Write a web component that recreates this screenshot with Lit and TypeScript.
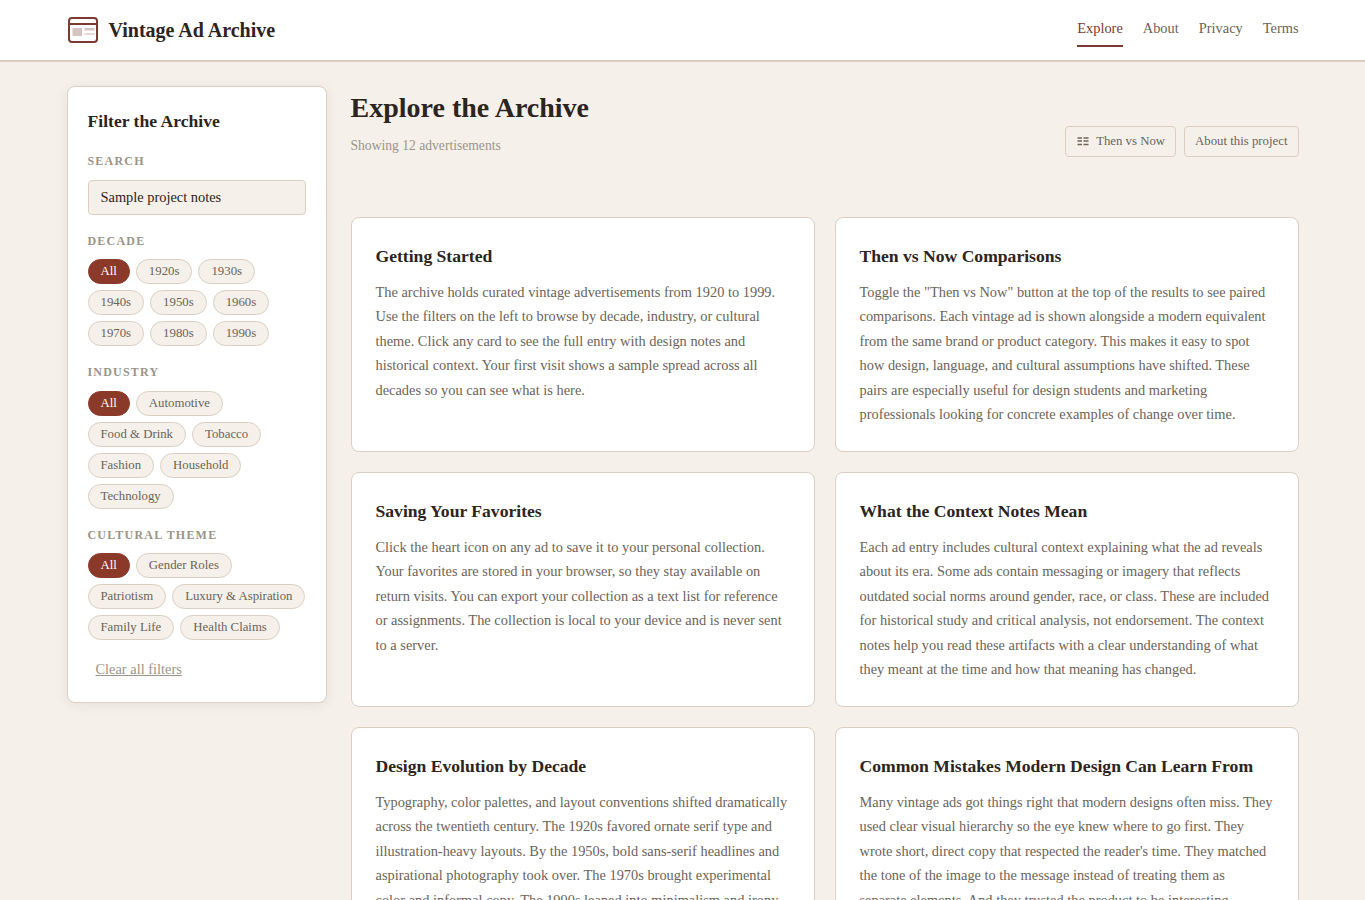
import { LitElement, html, css } from "lit";
import { customElement } from "lit/decorators.js";

const CARDS: [string, string][] = [
  ["Getting Started", "The archive holds curated vintage advertisements from 1920 to 1999. Use the filters on the left to browse by decade, industry, or cultural theme. Click any card to see the full entry with design notes and historical context. Your first visit shows a sample spread across all decades so you can see what is here."],
  ["Then vs Now Comparisons", "Toggle the \"Then vs Now\" button at the top of the results to see paired comparisons. Each vintage ad is shown alongside a modern equivalent from the same brand or product category. This makes it easy to spot how design, language, and cultural assumptions have shifted. These pairs are especially useful for design students and marketing professionals looking for concrete examples of change over time."],
  ["Saving Your Favorites", "Click the heart icon on any ad to save it to your personal collection. Your favorites are stored in your browser, so they stay available on return visits. You can export your collection as a text list for reference or assignments. The collection is local to your device and is never sent to a server."],
  ["What the Context Notes Mean", "Each ad entry includes cultural context explaining what the ad reveals about its era. Some ads contain messaging or imagery that reflects outdated social norms around gender, race, or class. These are included for historical study and critical analysis, not endorsement. The context notes help you read these artifacts with a clear understanding of what they meant at the time and how that meaning has changed."],
  ["Design Evolution by Decade", "Typography, color palettes, and layout conventions shifted dramatically across the twentieth century. The 1920s favored ornate serif type and illustration-heavy layouts. By the 1950s, bold sans-serif headlines and aspirational photography took over. The 1970s brought experimental color and informal copy. The 1990s leaned into minimalism and irony."],
  ["Common Mistakes Modern Design Can Learn From", "Many vintage ads got things right that modern designs often miss. They used clear visual hierarchy so the eye knew where to go first. They wrote short, direct copy that respected the reader's time. They matched the tone of the image to the message instead of treating them as separate elements. And they trusted the product to be interesting."],
];

const GROUPS: [string, string[]][] = [
  ["Decade", ["All", "1920s", "1930s", "1940s", "1950s", "1960s", "1970s", "1980s", "1990s"]],
  ["Industry", ["All", "Automotive", "Food & Drink", "Tobacco", "Fashion", "Household", "Technology"]],
  ["Cultural Theme", ["All", "Gender Roles", "Patriotism", "Luxury & Aspiration", "Family Life", "Health Claims"]],
];

@customElement("app-root")
export class AppRoot extends LitElement {
  static styles = css`
    :host {
      display: block;
      height: 900px;
      overflow: hidden;
      background: #f5f0ea;
      font-family: "Liberation Serif", "Times New Roman", serif;
      color: #2c2420;
    }
    .topbar {
      height: 62px;
      box-sizing: border-box;
      background: #fff;
      border-bottom: 2px solid #d9d0c3;
      display: flex;
      align-items: stretch;
      justify-content: space-between;
      padding: 0 66.5px;
    }
    .brand { display: flex; align-items: center; gap: 10px; }
    .brand svg { display: block; }
    .brand span { font-size: 20px; font-weight: 700; color: #2c2420; }
    nav { display: flex; gap: 20px; align-items: flex-start; }
    nav a {
      font-size: 14.4px;
      color: #6b6459;
      padding-top: 20px;
      height: 27px;
      line-height: 17px;
      box-sizing: content-box;
    }
    nav a.on { color: #7b3a30; border-bottom: 2px solid #7b3a30; height: 25px; }
    .page {
      display: grid;
      grid-template-columns: 260px 948px;
      gap: 24px;
      padding: 24px 66.5px 0;
    }
    aside {
      background: #fff;
      border: 1px solid #d9d0c3;
      border-radius: 8px;
      box-shadow: 0 2px 12px rgba(44, 36, 32, 0.08);
      padding: 24px 20px 24px;
      align-self: start;
      box-sizing: border-box;
    }
    aside h2 { margin: 0 0 22px; font-size: 17.6px; line-height: 21px; font-weight: 700; color: #2c2420; }
    .label {
      font-size: 12px;
      line-height: 14px;
      font-weight: 700;
      letter-spacing: 1.2px;
      text-transform: uppercase;
      color: #9a9489;
      margin-bottom: 12px;
    }
    .label.group { margin-bottom: 11.5px; }
    .search {
      height: 35px;
      box-sizing: border-box;
      border: 1px solid #d9d0c3;
      border-radius: 4px;
      background: #f5f0ea;
      padding: 0 12px;
      font-size: 14.4px;
      line-height: 33px;
      color: #2c2420;
      margin-bottom: 18.5px;
    }
    .chips { display: flex; flex-wrap: wrap; gap: 6px; margin-bottom: 19.15px; }
    .chip {
      box-sizing: border-box;
      height: 25px;
      padding: 0 12px;
      border: 1px solid #d9d0c3;
      border-radius: 20px;
      background: #f5f0ea;
      font-size: 12.8px;
      line-height: 22px;
      color: #6b6459;
    }
    .chip.on { background: #8b3a2a; border-color: #8b3a2a; color: #fff; }
    .clear {
      display: block;
      font-size: 14.4px;
      line-height: 17px;
      padding-top: 2px;
      margin-left: 8px;
      color: #9a9489;
      text-decoration: underline;
    }
    .head {
      height: 131px;
      display: flex;
      justify-content: space-between;
      align-items: flex-start;
    }
    h1 { margin: 0; font-size: 28px; line-height: 44px; font-weight: 700; color: #2c2420; }
    .count { font-size: 13.6px; line-height: 17px; color: #9a9489; margin-top: 7px; }
    .actions { display: flex; gap: 8px; margin-top: 40px; }
    .btn {
      box-sizing: border-box;
      height: 31px;
      padding: 0 10px;
      border: 1px solid #d9d0c3;
      border-radius: 4px;
      font-size: 12.8px;
      line-height: 28px;
      color: #6b6459;
      display: flex;
      gap: 7px;
    }
    .btn svg { display: block; align-self: center; margin-left: 1px; }
    .grid { display: grid; grid-template-columns: 464px 464px; gap: 20px; }
    .card {
      box-sizing: border-box;
      height: 235px;
      background: #fff;
      border: 1px solid #d9d0c3;
      border-radius: 8px;
      padding: 24px;
    }
    .card h3 { margin: 0 0 10px; font-size: 17.6px; line-height: 28px; font-weight: 700; color: #2c2420; }
    .card p { margin: 0; font-size: 14.4px; line-height: 24.48px; color: #6b6459; }
  `;

  render() {
    return html`
      <header class="topbar">
        <div class="brand">
          <svg width="32" height="28" viewBox="0 0 32 28" fill="none">
            <rect x="2" y="2" width="28" height="24" rx="3" stroke="#7b3a30" stroke-width="2"></rect>
            <path d="M2 8h28" stroke="#7b3a30" stroke-width="2"></path>
            <rect x="5.5" y="12" width="9.5" height="8" fill="#7b3a30" opacity=".3"></rect>
            <rect x="17.5" y="12" width="10" height="2.5" fill="#7b3a30" opacity=".3"></rect>
            <rect x="17.5" y="17" width="10" height="2" fill="#7b3a30" opacity=".2"></rect>
          </svg>
          <span>Vintage Ad Archive</span>
        </div>
        <nav>
          <a class="on">Explore</a><a>About</a><a>Privacy</a><a>Terms</a>
        </nav>
      </header>
      <div class="page">
        <aside>
          <h2>Filter the Archive</h2>
          <div class="label">Search</div>
          <div class="search">Sample project notes</div>
          ${GROUPS.map(
            ([name, items]) => html`
              <div class="label group">${name}</div>
              <div class="chips">
                ${items.map((c, i) => html`<span class="chip ${i === 0 ? "on" : ""}">${c}</span>`)}
              </div>
            `
          )}
          <a class="clear">Clear all filters</a>
        </aside>
        <main>
          <div class="head">
            <div>
              <h1>Explore the Archive</h1>
              <div class="count">Showing 12 advertisements</div>
            </div>
            <div class="actions">
              <div class="btn">
                <svg width="12" height="9" viewBox="0 0 12 9" fill="none" stroke="#6b6459" stroke-width="1.3">
                  <path d="M0.5 1h4.5M6.5 1h5M0.5 4h4.5M6.5 4h5M0.5 7.5h4.5M6.5 7.5h5"></path>
                </svg>
                <span>Then vs Now</span>
              </div>
              <div class="btn">About this project</div>
            </div>
          </div>
          <div class="grid">
            ${CARDS.map(([t, b]) => html`<article class="card"><h3>${t}</h3><p>${b}</p></article>`)}
          </div>
        </main>
      </div>
    `;
  }
}
